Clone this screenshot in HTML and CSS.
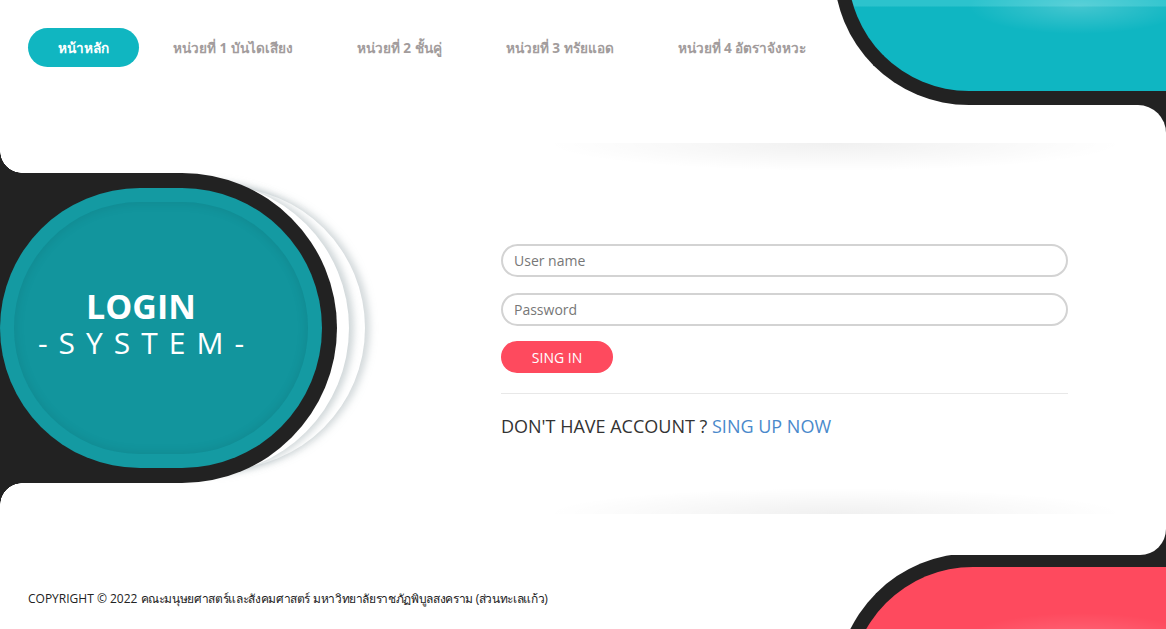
FILE: index.html
```html
<!DOCTYPE html>
<html lang="th">
<head>
    <meta charset="UTF-8">
    <meta name="viewport" content="width=device-width, initial-scale=1.0">
    <title>Login System</title>
    <link rel="stylesheet" href="styles.css">
</head>
<body>
    <!-- decorative corner shapes -->
    <div class="shape-top"></div>
    <div class="corner-bottom">
        <div class="shape-bottom"></div>
    </div>

    <nav class="menu">
        <a href="#" class="menu-item active">หน้าหลัก</a>
        <a href="#" class="menu-item">หน่วยที่ 1 บันไดเสียง</a>
        <a href="#" class="menu-item">หน่วยที่ 2 ชั้นคู่</a>
        <a href="#" class="menu-item">หน่วยที่ 3 ทรัยแอด</a>
        <a href="#" class="menu-item">หน่วยที่ 4 อัตราจังหวะ</a>
    </nav>

    <main class="panel">
        <div class="badge">
            <div class="disc">
                <div class="disc-inner">
                    <h1 class="disc-title">LOGIN</h1>
                    <p class="disc-sub">-SYSTEM-</p>
                </div>
            </div>
        </div>

        <form class="login-form" onsubmit="return false">
            <input type="text" class="field" placeholder="User name">
            <input type="password" class="field" placeholder="Password">
            <button type="submit" class="btn-signin">SING IN</button>
            <hr class="divider">
            <p class="signup">DON'T HAVE ACCOUNT ? <a href="#" class="signup-link">SING UP NOW</a></p>
        </form>
    </main>

    <footer class="footer">
        COPYRIGHT © 2022 <span class="footer-th">คณะมนุษยศาสตร์และสังคมศาสตร์ มหาวิทยาลัยราชภัฏพิบูลสงคราม (ส่วนทะเลแก้ว)</span>
    </footer>
</body>
</html>
```

FILE: styles.css
```css
* {
    box-sizing: border-box;
}
html {
    overflow: hidden;
}
body {
    margin: 0;
    height: 629px;
    overflow: hidden;
    position: relative;
    background: #fff;
    font-family: "Open Sans", "Noto Sans", "DejaVu Sans", sans-serif;
    color: #333;
}

/* corner shapes */
.shape-top {
    position: absolute;
    top: -30px;
    left: 834px;
    right: 0;
    height: 135px;
    background:
        radial-gradient(ellipse 110px 28px at 230px 36px, rgba(255, 255, 255, 0.22), transparent),
        linear-gradient(#2cc3cd 0, #2cc3cd 36px, #0fb6c2 37px);
    border-left: 14px solid #222;
    border-bottom: 14px solid #222;
    border-bottom-left-radius: 135px;
}
.shape-top::after {
    content: '';
    position: absolute;
    right: 0;
    bottom: -50px;
    width: 60px;
    height: 50px;
    background: #222;
}
.corner-bottom {
    position: absolute;
    top: 490px;
    left: 820px;
    right: 0;
    bottom: 0;
    overflow: hidden;
}
.shape-bottom {
    position: absolute;
    top: 63px;
    left: 16px;
    right: 0;
    height: 200px;
    background:
        radial-gradient(ellipse 120px 30px at 230px 76px, rgba(255, 255, 255, 0.18), transparent),
        #fe4a5e;
    border-left: 14px solid #222;
    border-top: 14px solid #222;
    border-top-left-radius: 137px;
}
.shape-bottom::before {
    content: '';
    position: absolute;
    right: 0;
    top: -64px;
    width: 60px;
    height: 50px;
    background: #222;
}

/* menu */
.menu {
    position: relative;
    z-index: 1;
    display: flex;
    height: 105px;
    padding: 28px 0 0 28px;
}
.menu-item {
    height: 39px;
    line-height: 39px;
    margin-left: 4px;
    padding: 0 30px;
    border-radius: 20px;
    font-size: 13.6px;
    font-weight: bold;
    color: #a29c9c;
    text-decoration: none;
}
.menu-item.active {
    margin-left: 0;
    background: #10b6c1;
    color: #fff;
}

/* main white panel */
.panel {
    position: relative;
    z-index: 1;
    display: flex;
    height: 450px;
    background: #fff;
    border-radius: 0 28px 26px 0;
}
.panel::before,
.panel::after {
    content: '';
    position: absolute;
    left: 545px;
    width: 580px;
    height: 28px;
}
.panel::before {
    top: 38px;
    background: radial-gradient(ellipse 50% 100% at 50% 0, rgba(0, 0, 0, 0.06), transparent);
}
.panel::after {
    bottom: 41px;
    height: 26px;
    background: radial-gradient(ellipse 50% 100% at 50% 100%, rgba(0, 0, 0, 0.06), transparent);
}

.badge {
    position: relative;
    width: 337px;
    height: 310px;
    margin-top: 68px;
    padding: 15px 15px 15px 0;
    background: #222;
    border-radius: 0 155px 155px 0;
    box-shadow:
        20px 0 0 -8px #fff,
        25px 0 7px -8px rgba(170, 182, 185, 0.55),
        42px 0 0 -14px #fff,
        47px 0 7px -14px rgba(170, 182, 185, 0.5);
}
.badge::before,
.badge::after {
    content: '';
    position: absolute;
    left: 0;
    width: 22px;
    height: 22px;
}
.badge::before {
    top: -22px;
    background: radial-gradient(circle at 100% 0, transparent 21.5px, #222 22px);
}
.badge::after {
    bottom: -22px;
    background: radial-gradient(circle at 100% 100%, transparent 21.5px, #222 22px);
}
.disc {
    height: 100%;
    padding: 14px;
    background: #149aa2;
    border-radius: 140px;
}
.disc-inner {
    display: flex;
    flex-direction: column;
    align-items: center;
    justify-content: center;
    height: 100%;
    padding: 0 40px 8px 0;
    background: #12959d;
    border-radius: 130px;
    box-shadow: inset 0 0 12px rgba(0, 0, 0, 0.1);
    color: #fff;
}
.disc-title {
    margin: 0;
    font-size: 34px;
    font-weight: bold;
    line-height: 36px;
}
.disc-sub {
    margin: 2px 0 0 11px;
    font-size: 30px;
    line-height: 34px;
    letter-spacing: 11px;
}

/* login form */
.login-form {
    width: 567px;
    margin: 139px 0 0 164px;
}
.field {
    display: block;
    width: 100%;
    height: 33px;
    margin-bottom: 16px;
    padding: 0 11px;
    border: 2px solid #d3d3d3;
    border-radius: 17px;
    font-family: inherit;
    font-size: 14px;
    color: #333;
    outline: none;
}
.field::placeholder {
    color: #777;
}
.btn-signin {
    display: block;
    width: 112px;
    height: 32px;
    margin-top: -1px;
    border: none;
    border-radius: 16px;
    background: #fe4a5e;
    color: #fff;
    font-family: inherit;
    font-size: 14px;
    cursor: pointer;
}
.divider {
    margin: 20px 0 0;
    border: none;
    border-top: 1px solid #e8e8e8;
}
.signup {
    margin: 20px 0 0;
    font-size: 18px;
    color: #333;
}
.signup-link {
    color: #4a89cb;
    text-decoration: none;
}

.footer {
    position: relative;
    z-index: 1;
    padding: 34px 0 0 28px;
    font-size: 12px;
    color: #222;
}
.footer-th {
    letter-spacing: -0.35px;
}
```
